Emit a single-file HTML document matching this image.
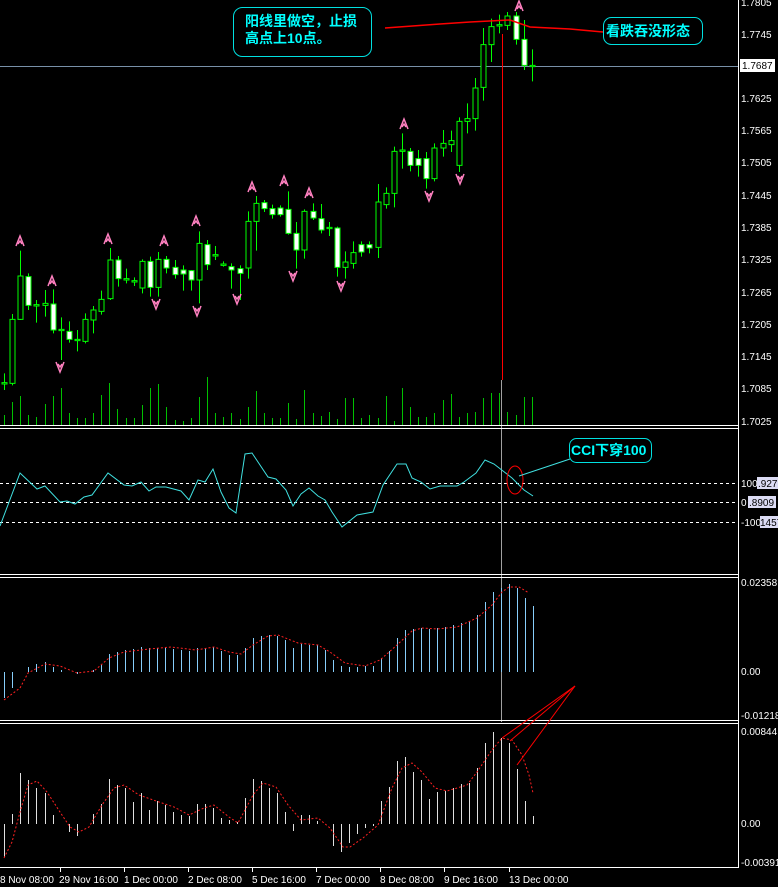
<!DOCTYPE html>
<html><head><meta charset="utf-8"><style>
html,body{margin:0;padding:0;background:#000;width:778px;height:887px;overflow:hidden}
svg{display:block}
text{font-family:"Liberation Sans","Noto Sans CJK SC",sans-serif;font-size:10px;fill:#fff}
.cj{font-family:"Liberation Sans","Noto Sans CJK SC",sans-serif;font-weight:bold;font-size:14px;fill:#00ffff}
.w{stroke:#00ff00;stroke-width:1;vector-effect:non-scaling-stroke}
</style></head><body>
<svg width="778" height="887" viewBox="0 0 778 887" xmlns="http://www.w3.org/2000/svg">
<rect width="778" height="887" fill="#000"/>
<!-- current price line -->
<line x1="0" y1="66.5" x2="738" y2="66.5" stroke="#7890a8" stroke-width="1"/>
<!-- volume -->
<g stroke="#00c000" stroke-width="1">
<path d="M4.5 425V415M12.5 425V402M20.5 425V396M28.5 425V415M36.5 425V417M45.5 425V404M53.5 425V396M61.5 425V388M69.5 425V413M77.5 425V418M85.5 425V418M93.5 425V413M101.5 425V395M109.5 425V383M117.5 425V409M126.5 425V418M134.5 425V418M142.5 425V405M150.5 425V388M158.5 425V384M166.5 425V407M175.5 425V420M183.5 425V421M191.5 425V418M199.5 425V397M207.5 425V377M215.5 425V413M223.5 425V417M231.5 425V413M240.5 425V419M248.5 425V407M256.5 425V391M264.5 425V413M272.5 425V418M280.5 425V418M288.5 425V403M296.5 425V419M304.5 425V390M313.5 425V413M321.5 425V416M329.5 425V412M337.5 425V419M345.5 425V398M353.5 425V398M361.5 425V418M369.5 425V415M378.5 425V418M386.5 425V396M394.5 425V421M402.5 425V388M410.5 425V407M418.5 425V417M426.5 425V417M434.5 425V413M443.5 425V400M451.5 425V394M459.5 425V417M467.5 425V413M475.5 425V412M483.5 425V398M491.5 425V393M499.5 425V393M507.5 425V412M516.5 425V415M524.5 425V397M532.5 425V397"/>
</g>
<!-- candles -->
<g transform="matrix(1,0,0,0.6667,0,0)">
<g id="c"></g>
<path class="w" fill="none" d="M4.5 560V585M12.5 471V578M20.5 376V480M28.5 410V465M36.5 450V484M45.5 435V475M53.5 434V500M61.5 476V540M69.5 482V514M77.5 495V527M85.5 470V515M93.5 459V500M101.5 436V472M110.5 372V450M118.5 384V430M126.5 403V425M134.5 416V429M142.5 389V440M150.5 385V445M158.5 378V445M166.5 384V410M175.5 390V418M183.5 398V436M191.5 405V436M199.5 347V455M207.5 360V405M215.5 369V390M223.5 392V400M231.5 395V433M240.5 398V450M248.5 317V418M256.5 294V376M264.5 300V318M272.5 307V328M280.5 308V325M288.5 287V352M296.5 333V403M304.5 314V388M313.5 305V330M321.5 306V350M329.5 333V354M337.5 340V415M345.5 377V418M353.5 362V403M361.5 362V385M369.5 362V380M378.5 276V387M386.5 281V313M394.5 220V311M402.5 200V253M410.5 222V257M418.5 225V265M426.5 228V283M434.5 215V272M443.5 195V235M451.5 196V228M459.5 176V258M467.5 155V200M475.5 117V196M483.5 42V151M491.5 28V93M499.5 22V50M507.5 18V45M516.5 18V67M524.5 30V105M532.5 74V122"/>
<g stroke="#00ff00" stroke-width="1">
<rect class="w" x="2" y="574" width="5" height="2" fill="#000"/>
<rect class="w" x="10" y="479" width="5" height="96" fill="#000"/>
<rect class="w" x="18" y="414" width="5" height="65" fill="#000"/>
<rect class="w" x="26" y="415" width="5" height="43" fill="#fff"/>
<rect class="w" x="34" y="457" width="5" height="2" fill="#000"/>
<rect class="w" x="43" y="455" width="5" height="3" fill="#000"/>
<rect class="w" x="51" y="456" width="5" height="39" fill="#fff"/>
<rect class="w" x="59" y="494" width="5" height="2" fill="#000"/>
<rect class="w" x="67" y="497" width="5" height="12" fill="#fff"/>
<rect class="w" x="75" y="509" width="5" height="2" fill="#000"/>
<rect class="w" x="83" y="479" width="5" height="33" fill="#000"/>
<rect class="w" x="91" y="465" width="5" height="15" fill="#000"/>
<rect class="w" x="99" y="449" width="5" height="18" fill="#000"/>
<rect class="w" x="108" y="390" width="5" height="58" fill="#000"/>
<rect class="w" x="116" y="390" width="5" height="28" fill="#fff"/>
<rect class="w" x="124" y="418" width="5" height="2" fill="#000"/>
<rect class="w" x="132" y="421" width="5" height="2" fill="#000"/>
<rect class="w" x="140" y="392" width="5" height="40" fill="#000"/>
<rect class="w" x="148" y="392" width="5" height="39" fill="#fff"/>
<rect class="w" x="156" y="389" width="5" height="42" fill="#000"/>
<rect class="w" x="164" y="389" width="5" height="13" fill="#fff"/>
<rect class="w" x="173" y="401" width="5" height="11" fill="#fff"/>
<rect class="w" x="181" y="405" width="5" height="6" fill="#fff"/>
<rect class="w" x="189" y="406" width="5" height="14" fill="#fff"/>
<rect class="w" x="197" y="365" width="5" height="55" fill="#000"/>
<rect class="w" x="205" y="367" width="5" height="30" fill="#fff"/>
<rect class="w" x="213" y="382" width="5" height="2" fill="#000"/>
<rect class="w" x="221" y="396" width="5" height="2" fill="#000"/>
<rect class="w" x="229" y="400" width="5" height="5" fill="#fff"/>
<rect class="w" x="238" y="403" width="5" height="7" fill="#fff"/>
<rect class="w" x="246" y="332" width="5" height="70" fill="#000"/>
<rect class="w" x="254" y="305" width="5" height="27" fill="#000"/>
<rect class="w" x="262" y="304" width="5" height="9" fill="#fff"/>
<rect class="w" x="270" y="313" width="5" height="9" fill="#fff"/>
<rect class="w" x="278" y="312" width="5" height="10" fill="#fff"/>
<rect class="w" x="286" y="314" width="5" height="36" fill="#fff"/>
<rect class="w" x="294" y="350" width="5" height="25" fill="#fff"/>
<rect class="w" x="302" y="317" width="5" height="58" fill="#000"/>
<rect class="w" x="311" y="317" width="5" height="10" fill="#fff"/>
<rect class="w" x="319" y="328" width="5" height="17" fill="#fff"/>
<rect class="w" x="327" y="341" width="5" height="2" fill="#000"/>
<rect class="w" x="335" y="342" width="5" height="59" fill="#fff"/>
<rect class="w" x="343" y="393" width="5" height="8" fill="#000"/>
<rect class="w" x="351" y="379" width="5" height="16" fill="#000"/>
<rect class="w" x="359" y="367" width="5" height="11" fill="#fff"/>
<rect class="w" x="367" y="367" width="5" height="5" fill="#fff"/>
<rect class="w" x="376" y="303" width="5" height="68" fill="#000"/>
<rect class="w" x="384" y="290" width="5" height="17" fill="#000"/>
<rect class="w" x="392" y="227" width="5" height="63" fill="#000"/>
<rect class="w" x="400" y="225" width="5" height="2" fill="#000"/>
<rect class="w" x="408" y="227" width="5" height="21" fill="#fff"/>
<rect class="w" x="416" y="238" width="5" height="10" fill="#fff"/>
<rect class="w" x="424" y="238" width="5" height="30" fill="#fff"/>
<rect class="w" x="432" y="222" width="5" height="46" fill="#000"/>
<rect class="w" x="441" y="215" width="5" height="7" fill="#000"/>
<rect class="w" x="449" y="211" width="5" height="6" fill="#000"/>
<rect class="w" x="457" y="182" width="5" height="66" fill="#000"/>
<rect class="w" x="465" y="178" width="5" height="4" fill="#000"/>
<rect class="w" x="473" y="132" width="5" height="46" fill="#000"/>
<rect class="w" x="481" y="67" width="5" height="64" fill="#000"/>
<rect class="w" x="489" y="40" width="5" height="27" fill="#000"/>
<rect class="w" x="497" y="37" width="5" height="2" fill="#000"/>
<rect class="w" x="505" y="24" width="5" height="14" fill="#000"/>
<rect class="w" x="514" y="24" width="5" height="35" fill="#fff"/>
<rect class="w" x="522" y="59" width="5" height="39" fill="#fff"/>
<rect class="w" x="530" y="98" width="5" height="2" fill="#000"/>
</g>
</g>
<!-- arrows -->
<g fill="none" stroke="#ff80c0" stroke-width="1.5">
<path id="u" d="M-4 5L0 -5L4 5M-2 3L0 0L2 3" transform="translate(20,241)"/>
<path d="M-4 5L0 -5L4 5M-2 3L0 0L2 3" transform="translate(52,281)"/>
<path d="M-4 5L0 -5L4 5M-2 3L0 0L2 3" transform="translate(108,239)"/>
<path d="M-4 5L0 -5L4 5M-2 3L0 0L2 3" transform="translate(164,241)"/>
<path d="M-4 5L0 -5L4 5M-2 3L0 0L2 3" transform="translate(196,221)"/>
<path d="M-4 5L0 -5L4 5M-2 3L0 0L2 3" transform="translate(252,187)"/>
<path d="M-4 5L0 -5L4 5M-2 3L0 0L2 3" transform="translate(284,181)"/>
<path d="M-4 5L0 -5L4 5M-2 3L0 0L2 3" transform="translate(309,193)"/>
<path d="M-4 5L0 -5L4 5M-2 3L0 0L2 3" transform="translate(404,124)"/>
<path d="M-4 5L0 -5L4 5M-2 3L0 0L2 3" transform="translate(519,6)"/>
<path d="M-4 -5L0 5L4 -5M-2 -3L0 0L2 -3" transform="translate(60,367)"/>
<path d="M-4 -5L0 5L4 -5M-2 -3L0 0L2 -3" transform="translate(156,304)"/>
<path d="M-4 -5L0 5L4 -5M-2 -3L0 0L2 -3" transform="translate(197,311)"/>
<path d="M-4 -5L0 5L4 -5M-2 -3L0 0L2 -3" transform="translate(237,299)"/>
<path d="M-4 -5L0 5L4 -5M-2 -3L0 0L2 -3" transform="translate(293,276)"/>
<path d="M-4 -5L0 5L4 -5M-2 -3L0 0L2 -3" transform="translate(341,286)"/>
<path d="M-4 -5L0 5L4 -5M-2 -3L0 0L2 -3" transform="translate(429,196)"/>
<path d="M-4 -5L0 5L4 -5M-2 -3L0 0L2 -3" transform="translate(460,179)"/>
</g>
<!-- red trend line & vertical -->
<polyline points="385,28 440,24 470,22 510,20 530,27 570,29 603,32" fill="none" stroke="#ff0000" stroke-width="1.5"/>
<line x1="502.5" y1="34" x2="502.5" y2="380" stroke="#ff0000" stroke-width="1"/>
<line x1="501.5" y1="380" x2="501.5" y2="722" stroke="#a0a0a0" stroke-width="1"/>
<!-- callouts -->
<rect x="233.5" y="7.5" width="138" height="49" rx="9" fill="#000" stroke="#00e0e0" stroke-width="1"/>
<text class="cj" x="245" y="26">阳线里做空，止损</text>
<text class="cj" x="245" y="43">高点上10点。</text>
<rect x="603.5" y="17.5" width="99" height="27" rx="8" fill="#000" stroke="#00e0e0" stroke-width="1"/>
<text class="cj" x="606" y="36">看跌吞没形态</text>
<!-- panel separators -->
<g stroke="#fff" stroke-width="1">
<line x1="0" y1="425.5" x2="738" y2="425.5"/><line x1="0" y1="428.5" x2="738" y2="428.5"/>
<line x1="0" y1="574.5" x2="738" y2="574.5"/><line x1="0" y1="577.5" x2="738" y2="577.5"/>
<line x1="0" y1="720.5" x2="738" y2="720.5"/><line x1="0" y1="723.5" x2="738" y2="723.5"/>
<line x1="0" y1="867.5" x2="738" y2="867.5"/>
<line x1="738.5" y1="0" x2="738.5" y2="868"/>
</g>
<!-- CCI -->
<g stroke="#fff" stroke-width="1" stroke-dasharray="3,3">
<line x1="0" y1="483.5" x2="738" y2="483.5"/><line x1="0" y1="502.5" x2="738" y2="502.5"/><line x1="0" y1="522.5" x2="738" y2="522.5"/>
</g>
<polyline fill="none" stroke="#40e0e0" stroke-width="1" points="0,526 20,473 37,489 45,486 60,502 67,501 75,504 84,497 92,495 108,473 124,485 132,486 141,482 149,491 156,487 166,487 181,491 189,500 198,480 205,482 213,469 221,492 229,508 236,513 245,454 252,453 268,477 276,479 286,490 293,506 301,494 309,488 318,496 325,500 332,512 342,527 357,515 373,512 383,485 397,464 406,464 412,478 421,482 430,489 440,486 457,486 464,482 476,473 485,460 494,464 512,478 524,490 533,496"/>
<ellipse cx="515" cy="480" rx="8" ry="14" fill="none" stroke="#ff0000" stroke-width="1"/>
<line x1="519" y1="476" x2="570" y2="459" stroke="#40e0e0" stroke-width="1"/>
<rect x="569.5" y="438.5" width="82" height="24" rx="7" fill="#000" stroke="#00e0e0" stroke-width="1"/>
<text class="cj" x="571" y="455">CCI下穿100</text>
<!-- MACD bars -->
<g stroke="#87cefa" stroke-width="1">
<path d="M4.5 672V698M12.5 672V688M28.5 672V667M36.5 672V664M45.5 672V662M53.5 672V667M61.5 672V670M77.5 672V674M93.5 672V670M101.5 672V665M109.5 672V654M117.5 672V652M125.5 672V650M133.5 672V649M141.5 672V647M149.5 672V648M157.5 672V648M165.5 672V648M173.5 672V649M181.5 672V650M189.5 672V651M197.5 672V648M205.5 672V648M213.5 672V647M221.5 672V651M229.5 672V655M237.5 672V655M245.5 672V648M253.5 672V638M261.5 672V636M269.5 672V635M277.5 672V636M285.5 672V640M293.5 672V648M301.5 672V644M309.5 672V645M317.5 672V645M325.5 672V650M333.5 672V660M341.5 672V666M349.5 672V667M357.5 672V667M365.5 672V666M373.5 672V666M381.5 672V658M389.5 672V651M397.5 672V638M405.5 672V630M413.5 672V629M421.5 672V628M429.5 672V629M437.5 672V628M445.5 672V627M453.5 672V625M461.5 672V623M469.5 672V621M477.5 672V615M485.5 672V602M493.5 672V592M501.5 672V588M509.5 672V584M517.5 672V588M525.5 672V598M533.5 672V606"/>
</g>
<polyline fill="none" stroke="#ff2020" stroke-width="1" stroke-dasharray="2,2" points="4,700 20,688 28,673 45,664 60,666 77,673 94,671 109,658 124,652 149,649 171,647 196,650 214,647 229,652 241,654 253,645 268,636 278,635 298,643 318,645 330,652 345,663 365,666 380,660 397,645 412,631 422,628 437,629 457,627 477,618 492,605 502,592 509,587 519,587 529,593"/>
<!-- OsMA bars -->
<g stroke="#e0e0e0" stroke-width="1">
<path d="M4.5 824V857M12.5 824V814M20.5 824V773M28.5 824V780M36.5 824V788M45.5 824V793M53.5 824V815M69.5 824V832M77.5 824V836M93.5 824V814M101.5 824V804M109.5 824V779M117.5 824V785M125.5 824V788M133.5 824V802M141.5 824V793M149.5 824V810M157.5 824V801M165.5 824V805M173.5 824V812M181.5 824V815M189.5 824V816M197.5 824V804M205.5 824V804M213.5 824V808M221.5 824V818M229.5 824V820M237.5 824V822M245.5 824V798M253.5 824V779M261.5 824V781M269.5 824V788M277.5 824V793M285.5 824V812M293.5 824V831M301.5 824V815M309.5 824V815M317.5 824V821M333.5 824V846M341.5 824V852M349.5 824V843M357.5 824V834M365.5 824V828M373.5 824V826M381.5 824V801M389.5 824V787M397.5 824V761M405.5 824V757M413.5 824V772M421.5 824V780M429.5 824V799M437.5 824V792M445.5 824V791M453.5 824V788M461.5 824V784M469.5 824V783M477.5 824V768M485.5 824V743M493.5 824V732M501.5 824V738M509.5 824V743M517.5 824V769M525.5 824V801M533.5 824V816"/>
</g>
<polyline fill="none" stroke="#ff2020" stroke-width="1" stroke-dasharray="2,2" points="4,858 12,842 20,812 28,785 37,781 47,792 60,812 70,827 79,832 89,827 102,805 114,788 124,785 139,795 159,802 174,807 189,815 204,808 214,805 229,817 238,823 253,795 263,783 276,787 288,805 301,820 318,818 330,828 343,847 350,847 363,838 378,825 392,788 402,768 412,763 422,772 435,788 447,791 467,785 477,772 492,750 502,738 512,740 522,755 529,775 533,793"/>
<g stroke="#ff0000" stroke-width="1">
<line x1="502" y1="738" x2="575" y2="686"/><line x1="510" y1="741" x2="575" y2="686"/><line x1="517" y1="765" x2="575" y2="686"/>
</g>
<!-- right axis labels -->
<g>
<text x="741" y="6">1.7805</text>
<text x="741" y="38">1.7745</text>
<rect x="740" y="59" width="35" height="13" fill="#fff"/><text x="742" y="69" style="fill:#000">1.7687</text>
<text x="741" y="102">1.7625</text>
<text x="741" y="134">1.7565</text>
<text x="741" y="166">1.7505</text>
<text x="741" y="199">1.7445</text>
<text x="741" y="231">1.7385</text>
<text x="741" y="263">1.7325</text>
<text x="741" y="296">1.7265</text>
<text x="741" y="328">1.7205</text>
<text x="741" y="360">1.7145</text>
<text x="741" y="392">1.7085</text>
<text x="741" y="425">1.7025</text>
<text x="741" y="487">100</text><rect x="757" y="477" width="21" height="12" fill="#dcdcf4"/><text x="758" y="487" style="fill:#000">.9279</text>
<text x="741" y="506">0</text><rect x="748" y="496" width="28" height="12" fill="#dcdcf4"/><text x="749" y="506" style="fill:#000">.8909</text>
<text x="741" y="526">-100</text><rect x="760" y="516" width="18" height="12" fill="#dcdcf4"/><text x="760" y="526" style="fill:#000">1457</text>
<text x="741" y="586">0.02358</text>
<text x="741" y="675">0.00</text>
<text x="741" y="719">-0.01218</text>
<text x="741" y="735">0.00844</text>
<text x="741" y="827">0.00</text>
<text x="741" y="866">-0.00391</text>
</g>
<!-- time axis -->
<g stroke="#fff" stroke-width="1"><path d="M60.5 868V872M124.5 868V872M188.5 868V872M252.5 868V872M316.5 868V872M380.5 868V872M444.5 868V872M509.5 868V872"/></g>
<g>
<text x="0" y="883">8 Nov 08:00</text>
<text x="59" y="883">29 Nov 16:00</text>
<text x="124" y="883">1 Dec 00:00</text>
<text x="188" y="883">2 Dec 08:00</text>
<text x="252" y="883">5 Dec 16:00</text>
<text x="316" y="883">7 Dec 00:00</text>
<text x="380" y="883">8 Dec 08:00</text>
<text x="444" y="883">9 Dec 16:00</text>
<text x="509" y="883">13 Dec 00:00</text>
</g>
</svg>
</body></html>
